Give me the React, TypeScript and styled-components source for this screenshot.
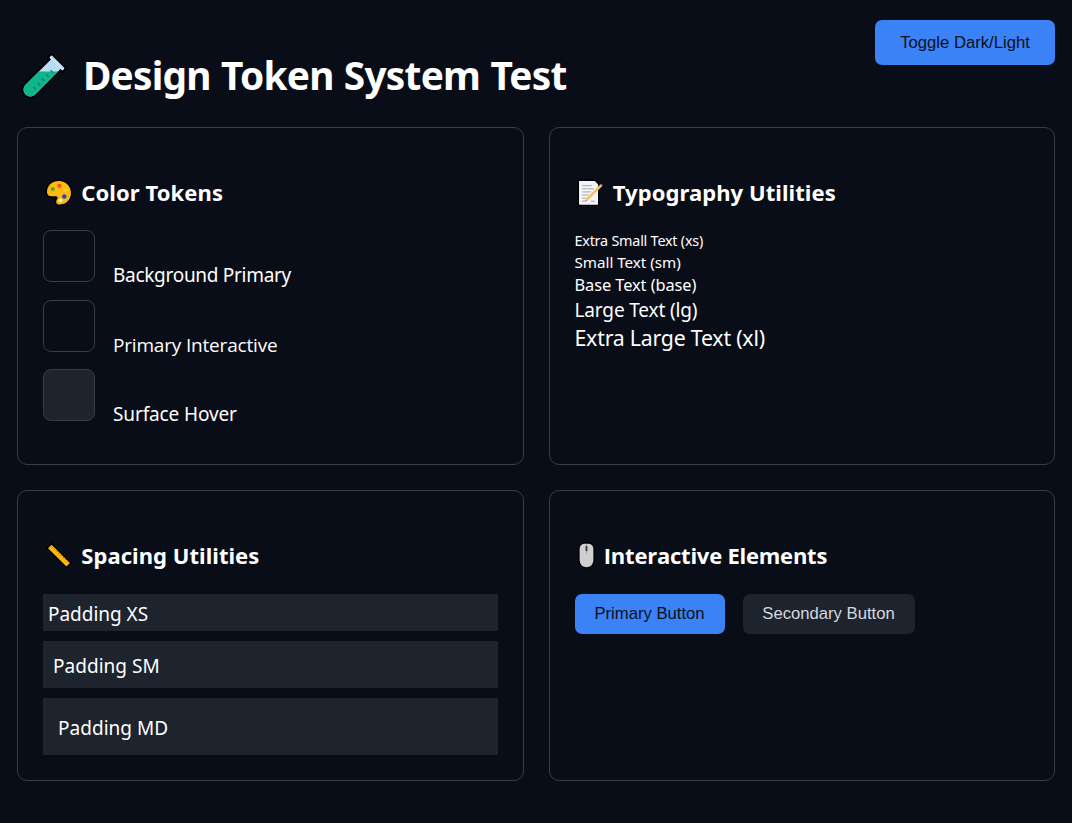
import React from "react";
import styled, { createGlobalStyle } from "styled-components";

const color = {
  background: "#090d18",
  surface: "#1e242e",
  border: "#373c47",
  primary: "#3b82f6",
  onPrimary: "#0a0f1c",
  text: "#ffffff",
  muted: "#d5d8de",
};

const plainCapitals = `"Open Sans", "Noto Sans", sans-serif`;

const GlobalStyle = createGlobalStyle`
  * { box-sizing: border-box; }
  body {
    margin: 0;
    background: ${color.background};
    color: ${color.text};
    font-family: "Noto Sans", "Open Sans", sans-serif;
  }
`;

const Page = styled.main`
  min-height: 823px;
  padding: 0 17px;
`;

const Header = styled.header`
  display: flex;
  justify-content: space-between;
  align-items: flex-start;
  height: 126.8px;
  padding-top: 20px;
`;

const Title = styled.h1`
  display: flex;
  margin: 29px 0 0;
  font-size: 38.8px;
  font-weight: 700;
  line-height: 52.8px;
  letter-spacing: -0.75px;
  word-spacing: 0.9px;
  white-space: nowrap;
`;

const Button = styled.button<{ $secondary?: boolean; $width: number; $height: number }>`
  width: ${(p) => p.$width}px;
  height: ${(p) => p.$height}px;
  padding: 0;
  border: 0;
  border-radius: 7px;
  background: ${(p) => (p.$secondary ? color.surface : color.primary)};
  color: ${(p) => (p.$secondary ? color.muted : color.onPrimary)};
  font-family: "Liberation Sans", Arial, sans-serif;
  font-size: 16.67px;
  line-height: 19px;
  cursor: pointer;
`;

const Grid = styled.div`
  display: grid;
  grid-template-columns: 1fr 1fr;
  grid-template-rows: 338.4px 290.8px;
  gap: 25px;
`;

const Card = styled.section`
  padding: 25px;
  border: 1px solid ${color.border};
  border-radius: 10px;
`;

const CardTitle = styled.h2<{ $tracking: number; $plain?: boolean }>`
  display: flex;
  margin: 25px 0 22.5px;
  font-size: 22px;
  font-weight: 700;
  line-height: 28.4px;
  letter-spacing: ${(p) => p.$tracking}px;
  white-space: nowrap;
  ${(p) => p.$plain && `font-family: ${plainCapitals};`}
`;

const Icon = styled.svg`
  display: block;
  flex: none;
`;

const SwatchRow = styled.div`
  display: flex;
  align-items: baseline;
  gap: 18px;
  height: 69.6px;
`;

const Swatch = styled.div<{ $filled?: boolean }>`
  width: 52px;
  height: 52px;
  border: 1px solid ${color.border};
  border-radius: 8px;
  background: ${(p) => (p.$filled ? color.surface : "transparent")};
`;

const SwatchLabel = styled.span<{ $tracking: number; $plain?: boolean }>`
  font-size: 19px;
  line-height: 26px;
  letter-spacing: ${(p) => p.$tracking}px;
  ${(p) => p.$plain && `font-family: ${plainCapitals};`}
`;

const Sample = styled.div<{ $size: number; $line: number; $tracking: number }>`
  font-size: ${(p) => p.$size}px;
  line-height: ${(p) => p.$line}px;
  letter-spacing: ${(p) => p.$tracking}px;
`;

const SpacingBox = styled.div<{ $pad: number; $tracking: number }>`
  margin-bottom: 10px;
  padding: ${(p) => p.$pad + 2.2}px ${(p) => p.$pad}px ${(p) => p.$pad - 2.2}px;
  background: ${color.surface};
  font-size: 19px;
  line-height: 27px;
  letter-spacing: ${(p) => p.$tracking}px;
`;

const Actions = styled.div`
  display: flex;
  gap: 18px;
`;

const TestTubeIcon = () => (
  <Icon width="65.9" height="52" viewBox="0 0 65.9 52" aria-hidden="true">
    <defs>
      <clipPath id="liquid">
        <rect x="0" y="22.4" width="66" height="30" />
      </clipPath>
    </defs>
    <g transform="translate(40.2 13.8) rotate(45)" stroke="#000" strokeWidth="4.4" strokeLinejoin="round">
      <path d="M-9-1H9V2H6.8V38A6.8 6.8 0 0 1-6.8 38V2H-9Z" />
    </g>
    <path transform="translate(40.2 13.8) rotate(45)" d="M-6.8 0H6.8V38A6.8 6.8 0 0 1-6.8 38Z" fill="#b9dcf6" />
    <g clipPath="url(#liquid)">
      <path transform="translate(40.2 13.8) rotate(45)" d="M-6.8 0H6.8V38A6.8 6.8 0 0 1-6.8 38Z" fill="#10b58b" />
    </g>
    <g transform="translate(40.2 13.8) rotate(45)">
      <rect x="-9.4" y="-1.4" width="18.8" height="3.4" rx="1.2" fill="#c5e3f8" />
      <path d="M0.5 10H4M0.5 16H4M0.5 22H4M0.5 28H4M0.5 34H4" stroke="#0b7d6b" strokeWidth="1.2" />
    </g>
  </Icon>
);

const PaletteIcon = () => (
  <Icon width="38.3" height="30" viewBox="0 0 38.3 30" aria-hidden="true">
    <path
      d="M16 3C9 3 4 7.5 4 14C4 17 6 18.3 8.5 18.3H12.6C14.6 18.3 15.2 19.5 14.3 21C12.3 23.8 13 26.6 16.6 26.6C23 26.6 28 21.6 28 15C28 8 22.8 3 16 3Z"
      fill="#fdb813"
      stroke="#000"
      strokeWidth="3"
      paintOrder="stroke"
    />
    <circle cx="9.8" cy="11" r="2.1" fill="#4cae1e" />
    <circle cx="16.4" cy="7.9" r="2.1" fill="#f4511e" />
    <circle cx="22.3" cy="12" r="2.1" fill="#ffd60a" />
    <circle cx="21.3" cy="18.5" r="2.2" fill="#2449b8" />
    <circle cx="17.6" cy="22.3" r="1.9" fill="#fff3cf" />
  </Icon>
);

const MemoIcon = () => (
  <Icon width="38.3" height="30" viewBox="0 0 38.3 30" aria-hidden="true">
    <path d="M4.2 3H19.6L23 6.4V26.6H4.2Z" fill="#f4f5f7" stroke="#000" strokeWidth="3" paintOrder="stroke" />
    <path d="M22 10L27.4 7" stroke="#000" strokeWidth="4" />
    <path d="M4.2 3H19.6L23 6.4V26.6H4.2Z" fill="#f4f5f7" />
    <path d="M7 7.7H17M7 10.8H19M7 13.9H16M7 17H14M7 20.1H11M7 23.2H10M16 23.2H20" stroke="#a6a9b0" strokeWidth="1" />
    <path d="M10.2 23.4L11.4 20.3L25.2 6.6L27 8.4L13.2 21.9Z" fill="#f3c35c" />
    <path d="M25.2 6.6L26 5.9L27.8 7.6L27 8.4Z" fill="#e9a6a0" />
    <path d="M10.2 23.4L10.8 21.8L11.8 22.7Z" fill="#5b5148" />
  </Icon>
);

const RulerIcon = () => (
  <Icon width="38.3" height="30" viewBox="0 0 38.3 30" aria-hidden="true">
    <g transform="translate(16 14.6) rotate(45)">
      <rect x="-13" y="-2.5" width="26" height="5" fill="#fbb614" stroke="#000" strokeWidth="3" paintOrder="stroke" />
      <path d="M-10.5-2.5V-1.2M-7.5-2.5V-1.2M-4.5-2.5V-1.2M-1.5-2.5V-1.2M1.5-2.5V-1.2M4.5-2.5V-1.2M7.5-2.5V-1.2M10.5-2.5V-1.2" stroke="#6b4a08" strokeWidth="0.9" />
    </g>
  </Icon>
);

const MouseIcon = () => (
  <Icon width="29.3" height="30" viewBox="0 0 29.3 30" aria-hidden="true">
    <path
      d="M4.6 7.8A5 5 0 0 1 9.6 2.8H13.4A5 5 0 0 1 18.4 7.8V19.3A6.9 6.9 0 0 1 4.6 19.3Z"
      fill="#cfcfcf"
      stroke="#000"
      strokeWidth="3"
      paintOrder="stroke"
    />
    <path d="M11.5 2.8V13" stroke="#a9a9a9" strokeWidth="1" />
    <rect x="10.5" y="4.8" width="2" height="5.4" rx="1" fill="#454545" />
  </Icon>
);

export default function App() {
  return (
    <>
      <GlobalStyle />
      <Page>
        <Header>
          <Title>
            <TestTubeIcon />
            Design Token System Test
          </Title>
          <Button $width={180} $height={45}>Toggle Dark/Light</Button>
        </Header>
        <Grid>
          <Card>
            <CardTitle $tracking={0.08}>
              <PaletteIcon />
              Color Tokens
            </CardTitle>
            <SwatchRow>
              <Swatch />
              <SwatchLabel $tracking={-0.29}>Background Primary</SwatchLabel>
            </SwatchRow>
            <SwatchRow>
              <Swatch />
              <SwatchLabel $plain $tracking={-0.18}>Primary Interactive</SwatchLabel>
            </SwatchRow>
            <SwatchRow>
              <Swatch $filled />
              <SwatchLabel $tracking={-0.12}>Surface Hover</SwatchLabel>
            </SwatchRow>
          </Card>
          <Card>
            <CardTitle $tracking={0.07}>
              <MemoIcon />
              Typography Utilities
            </CardTitle>
            <Sample $size={14.4} $line={21.6} $tracking={-0.23}>Extra Small Text (xs)</Sample>
            <Sample $size={15.2} $line={20.4} $tracking={-0.02}>Small Text (sm)</Sample>
            <Sample $size={16.4} $line={25.8} $tracking={-0.08}>Base Text (base)</Sample>
            <Sample $size={19} $line={24} $tracking={-0.14}>Large Text (lg)</Sample>
            <Sample $size={21.3} $line={31} $tracking={-0.22}>Extra Large Text (xl)</Sample>
          </Card>
          <Card>
            <CardTitle $tracking={0.05}>
              <RulerIcon />
              Spacing Utilities
            </CardTitle>
            <SpacingBox $pad={5} $tracking={-0.03}>Padding XS</SpacingBox>
            <SpacingBox $pad={10} $tracking={0.03}>Padding SM</SpacingBox>
            <SpacingBox $pad={15} $tracking={0.03}>Padding MD</SpacingBox>
          </Card>
          <Card>
            <CardTitle $plain $tracking={-0.23}>
              <MouseIcon />
              Interactive Elements
            </CardTitle>
            <Actions>
              <Button $width={150} $height={40}>Primary Button</Button>
              <Button $secondary $width={172} $height={40}>Secondary Button</Button>
            </Actions>
          </Card>
        </Grid>
      </Page>
    </>
  );
}
